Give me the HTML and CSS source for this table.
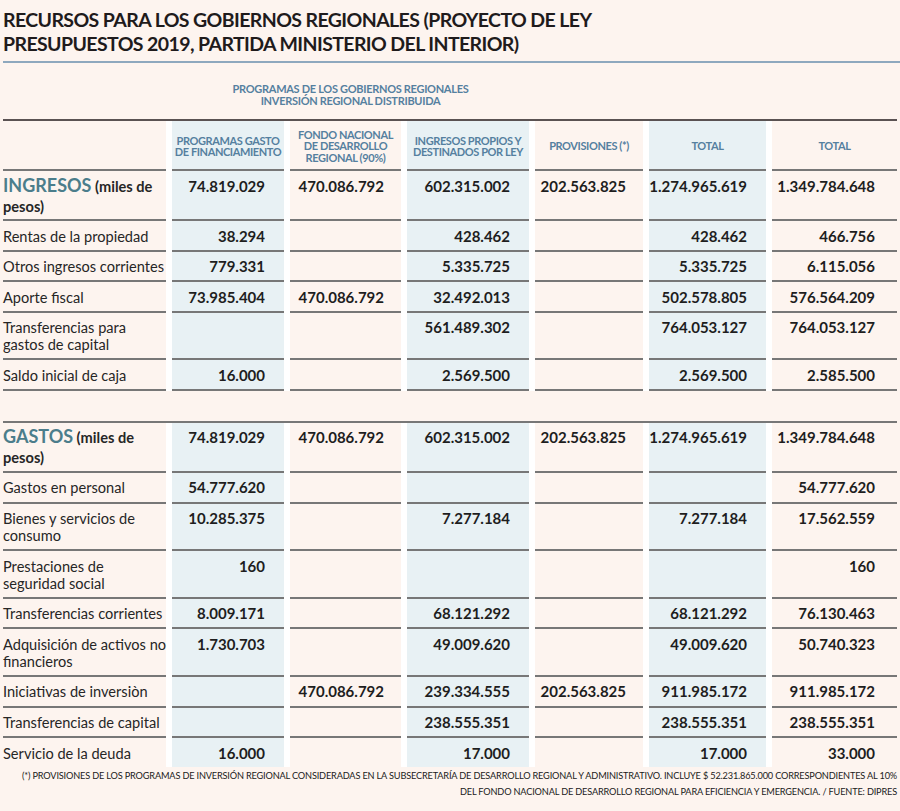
FILE: index.html
```html
<!DOCTYPE html>
<html lang="es">
<head>
<meta charset="utf-8">
<title>Recursos para los gobiernos regionales</title>
<link rel="stylesheet" href="styles.css">
</head>
<body>
<div class="page">
  <h1 class="title">RECURSOS PARA LOS GOBIERNOS REGIONALES (PROYECTO DE LEY<br>PRESUPUESTOS 2019, PARTIDA MINISTERIO DEL INTERIOR)</h1>
  <div class="rule"></div>
  <div class="group">PROGRAMAS DE LOS GOBIERNOS REGIONALES<br>INVERSIÓN REGIONAL DISTRIBUIDA</div>

  <div class="table">
    <div class="head">
      <div></div>
      <div>PROGRAMAS GASTO<br>DE FINANCIAMIENTO</div>
      <div>FONDO NACIONAL<br>DE DESARROLLO<br>REGIONAL (90%)</div>
      <div>INGRESOS PROPIOS Y<br>DESTINADOS POR LEY</div>
      <div>PROVISIONES (*)</div>
      <div>TOTAL</div>
      <div>TOTAL</div>
    </div>

    <div class="row">
      <div class="strong"><span class="sect">INGRESOS</span> (miles de<br>pesos)</div>
      <div>74.819.029</div><div>470.086.792</div><div>602.315.002</div><div>202.563.825</div><div>1.274.965.619</div><div>1.349.784.648</div>
    </div>
    <div class="row">
      <div>Rentas de la propiedad</div>
      <div>38.294</div><div></div><div>428.462</div><div></div><div>428.462</div><div>466.756</div>
    </div>
    <div class="row">
      <div>Otros ingresos corrientes</div>
      <div>779.331</div><div></div><div>5.335.725</div><div></div><div>5.335.725</div><div>6.115.056</div>
    </div>
    <div class="row">
      <div>Aporte fiscal</div>
      <div>73.985.404</div><div>470.086.792</div><div>32.492.013</div><div></div><div>502.578.805</div><div>576.564.209</div>
    </div>
    <div class="row">
      <div>Transferencias para<br>gastos de capital</div>
      <div></div><div></div><div>561.489.302</div><div></div><div>764.053.127</div><div>764.053.127</div>
    </div>
    <div class="row">
      <div>Saldo inicial de caja</div>
      <div>16.000</div><div></div><div>2.569.500</div><div></div><div>2.569.500</div><div>2.585.500</div>
    </div>

    <div class="sep"></div>

    <div class="row">
      <div class="strong"><span class="sect">GASTOS</span> (miles de<br>pesos)</div>
      <div>74.819.029</div><div>470.086.792</div><div>602.315.002</div><div>202.563.825</div><div>1.274.965.619</div><div>1.349.784.648</div>
    </div>
    <div class="row">
      <div>Gastos en personal</div>
      <div>54.777.620</div><div></div><div></div><div></div><div></div><div>54.777.620</div>
    </div>
    <div class="row">
      <div>Bienes y servicios de<br>consumo</div>
      <div>10.285.375</div><div></div><div>7.277.184</div><div></div><div>7.277.184</div><div>17.562.559</div>
    </div>
    <div class="row">
      <div>Prestaciones de<br>seguridad social</div>
      <div>160</div><div></div><div></div><div></div><div></div><div>160</div>
    </div>
    <div class="row">
      <div>Transferencias corrientes</div>
      <div>8.009.171</div><div></div><div>68.121.292</div><div></div><div>68.121.292</div><div>76.130.463</div>
    </div>
    <div class="row">
      <div>Adquisición de activos no<br>financieros</div>
      <div>1.730.703</div><div></div><div>49.009.620</div><div></div><div>49.009.620</div><div>50.740.323</div>
    </div>
    <div class="row">
      <div>Iniciativas de inversiòn</div>
      <div></div><div>470.086.792</div><div>239.334.555</div><div>202.563.825</div><div>911.985.172</div><div>911.985.172</div>
    </div>
    <div class="row">
      <div>Transferencias de capital</div>
      <div></div><div></div><div>238.555.351</div><div></div><div>238.555.351</div><div>238.555.351</div>
    </div>
    <div class="row last">
      <div>Servicio de la deuda</div>
      <div>16.000</div><div></div><div>17.000</div><div></div><div>17.000</div><div>33.000</div>
    </div>
  </div>

  <p class="note">(*) PROVISIONES DE LOS PROGRAMAS DE INVERSIÓN REGIONAL CONSIDERADAS EN LA SUBSECRETARÍA DE DESARROLLO REGIONAL Y ADMINISTRATIVO. INCLUYE $ 52.231.865.000 CORRESPONDIENTES AL 10%<br>DEL FONDO NACIONAL DE DESARROLLO REGIONAL PARA EFICIENCIA Y EMERGENCIA. / FUENTE: DIPRES</p>
</div>
</body>
</html>
```

FILE: styles.css
```css
* { box-sizing: border-box; }

body {
  margin: 0;
  background: #fdf4ef;
  font-family: Lato, "Open Sans", sans-serif;
  color: #222;
}

.page {
  padding-left: 3px;
  width: 900px;
}

.title {
  margin: 0;
  padding-top: 8px;
  font-size: 19.5px;
  line-height: 24px;
  font-weight: 700;
  letter-spacing: -0.6px;
  color: #1f1b1c;
}

.rule {
  height: 2px;
  margin-top: 5px;
  background: #8ea8be;
}

.group {
  margin: 20px 0 12px 169px;
  width: 357px;
  text-align: center;
  font-size: 11px;
  line-height: 12px;
  font-weight: 700;
  letter-spacing: -0.3px;
  color: #55809f;
}

.table {
  display: grid;
  grid-template-columns: 163px 112px 111px 122px 108px 117px 125px;
  column-gap: 6px;
  width: 894px;
  background: #fff;
  border-top: 2px solid #5a5252;
}

.head, .row { display: contents; }

.head > div {
  height: 50px;
  padding-top: 2px;
  display: flex;
  align-items: center;
  justify-content: center;
  text-align: center;
  font-size: 11px;
  line-height: 11.5px;
  font-weight: 700;
  letter-spacing: -0.4px;
  color: #55809f;
  border-bottom: 2px solid #777;
  background: #fdf4ef;
}

.head > div:nth-child(2),
.head > div:nth-child(4),
.head > div:nth-child(6) { background: #e8f1f4; }

.row > div {
  padding: 6.5px 17px 5.1px 0;
  line-height: 17px;
  font-size: 15px;
  font-weight: 700;
  text-align: right;
  color: #1e1e1e;
  border-bottom: 2px solid #777;
  background: #fdf4ef;
  white-space: nowrap;
}

.row > div:nth-child(1) {
  padding-right: 0;
  text-align: left;
  font-size: 14.6px;
  font-weight: 400;
  color: #262626;
}

.row > div.strong {
  padding-top: 5.5px;
  padding-bottom: 2.5px;
  line-height: 20px;
  font-weight: 700;
}

.sect {
  font-size: 18px;
  line-height: 16px;
  color: #4b7d8b;
}

.row > div:nth-child(2),
.row > div:nth-child(4),
.row > div:nth-child(6) {
  background: #e8f1f4;
  padding-right: 19px;
}

.row > div:nth-child(7) { padding-right: 22px; }

.row.last > div { border-bottom: none; }

.sep {
  grid-column: 1 / -1;
  height: 32px;
  background: #fdf4ef;
  border-bottom: 2px solid #777;
}

.note {
  margin: 0;
  padding: 1px 3px 0 0;
  font-size: 9.2px;
  line-height: 16px;
  letter-spacing: -0.17px;
  text-align: right;
  color: #1a1a1a;
}
```
